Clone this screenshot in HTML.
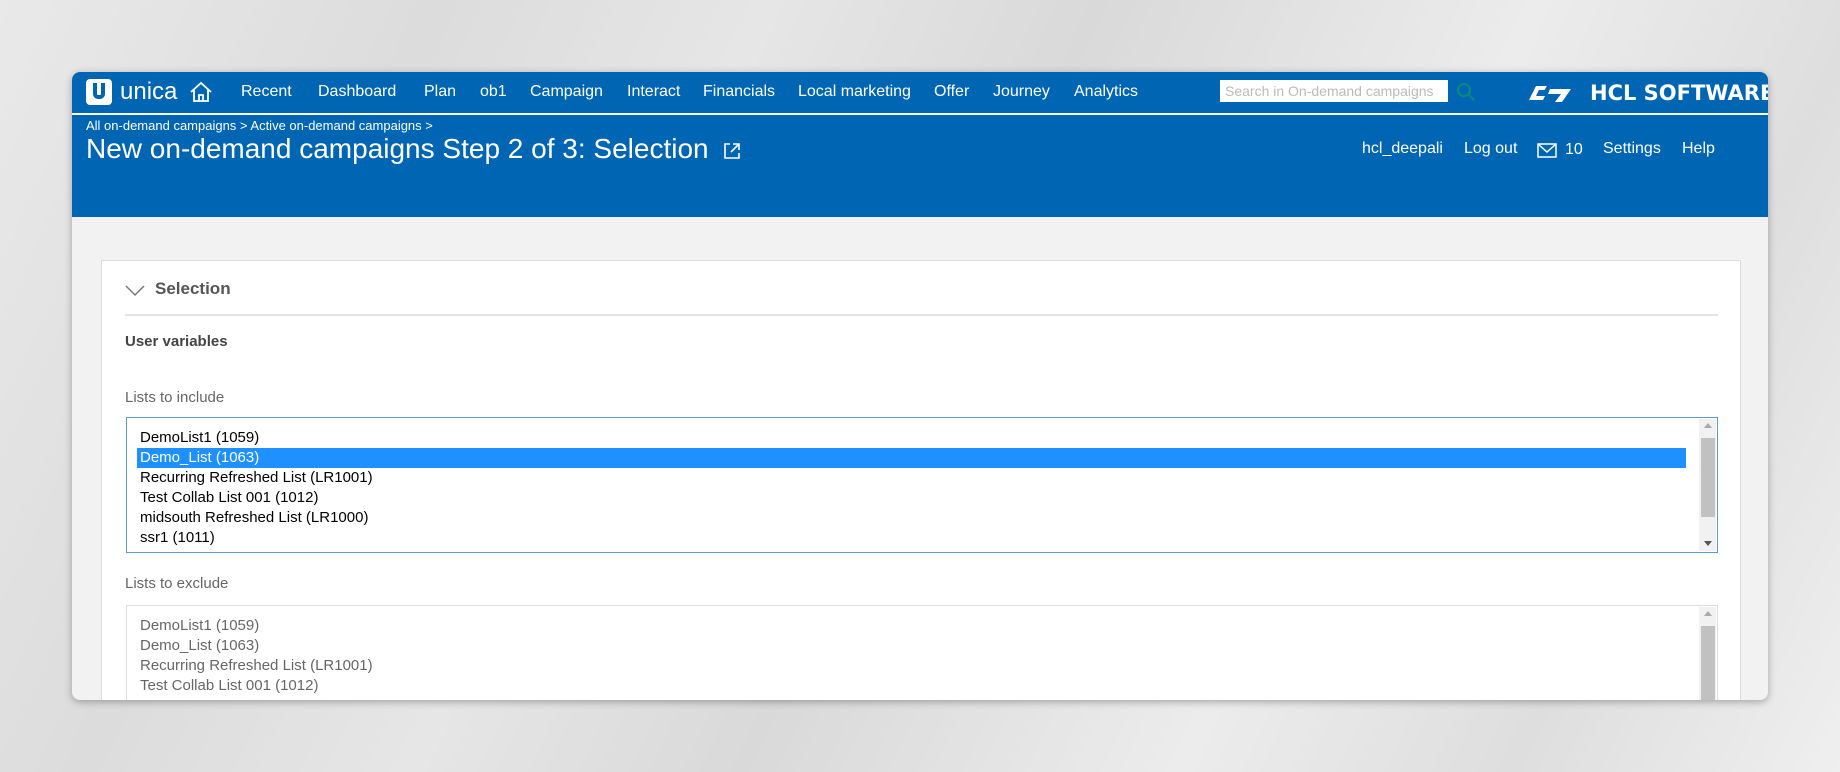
<!DOCTYPE html>
<html><head><meta charset="utf-8"><style>
*{margin:0;padding:0;box-sizing:border-box}
body{width:1840px;height:772px;overflow:hidden;font-family:"Liberation Sans",Arial,sans-serif;
background:linear-gradient(115deg,#e9e9e9 0%,#dcdcdc 20%,#e6e6e6 35%,#d9d9d9 50%,#ececec 70%,#dedede 85%,#efefef 100%);position:relative}
.a{position:absolute;white-space:nowrap}
.card{position:absolute;left:72px;top:72px;width:1696px;height:628px;border-radius:8px;overflow:hidden;background:#f2f2f2;box-shadow:0 2px 8px rgba(0,0,0,.3)}
.hdr{position:absolute;left:0;top:0;width:1696px;height:145px;background:#0066b3}
.line{position:absolute;left:0;top:41px;width:1696px;height:2px;background:#fff}
.nav{font-size:16px;color:#fff}
.panel{position:absolute;left:29px;top:188px;width:1640px;height:460px;background:#fff;border:1px solid #ddd}
.lb{position:absolute;left:54px;width:1592px;background:#fff}
.it{position:absolute;left:13px;font-size:15px;height:20px;line-height:20px}
.sb{position:absolute;right:1px;top:1px;width:17px;bottom:1px;background:#f1f1f1}
.th{position:absolute;left:2px;width:14px;background:#c1c1c1}
</style></head><body>
<div class="card">
 <div class="hdr">
  <div class="a" style="left:14px;top:7px;width:26px;height:26px;background:#fff;border-radius:4px"><div style="position:absolute;left:7px;top:4px;width:12px;height:16px;border:4px solid #0066b3;border-top:none;border-radius:0 0 5px 5px"></div></div>
  <div class="a" style="left:48px;top:6px;font-size:24px;color:#fff">unica</div>
  <svg class="a" style="left:117px;top:8px" width="24" height="24" viewBox="0 0 24 24" fill="none" stroke="#fff" stroke-width="1.8"><path d="M2 12L12 3l10 9M5 10v11h14V10M10 21v-6h4v6"/></svg>
  <div class="a nav" style="left:169px;top:11px">Recent</div>
  <div class="a nav" style="left:246px;top:11px">Dashboard</div>
  <div class="a nav" style="left:352px;top:11px">Plan</div>
  <div class="a nav" style="left:408px;top:11px">ob1</div>
  <div class="a nav" style="left:458px;top:11px">Campaign</div>
  <div class="a nav" style="left:555px;top:11px">Interact</div>
  <div class="a nav" style="left:631px;top:11px">Financials</div>
  <div class="a nav" style="left:726px;top:11px">Local marketing</div>
  <div class="a nav" style="left:862px;top:11px">Offer</div>
  <div class="a nav" style="left:921px;top:11px">Journey</div>
  <div class="a nav" style="left:1002px;top:11px">Analytics</div>
  <div class="a" style="left:1148px;top:8px;width:228px;height:22px;background:#fff;color:#bbb;font-size:14px;line-height:22px;padding-left:5px;overflow:hidden">Search in On-demand campaigns</div>
  <svg class="a" style="left:1384px;top:10px" width="20" height="20" viewBox="0 0 20 20" fill="none" stroke="#0a8a7a" stroke-width="2"><circle cx="8" cy="8" r="6"/><path d="M12.5 12.5l6 6"/></svg>
  <svg class="a" style="left:1457px;top:13px" width="44" height="18" viewBox="0 0 44 18" fill="#fff"><path d="M7 1h11l-2.5 4H10L7 11h9l-2 4H0z"/><path d="M21 4h21l-9 13h-7l6-8h-13z"/></svg>
  <div class="a" style="left:1518px;top:9px;font-size:21px;font-weight:bold;color:#fff;font-family:'DejaVu Sans',sans-serif">HCL SOFTWARE</div>
  <div class="line"></div>
  <div class="a" style="left:14px;top:46px;font-size:13px;color:#fff">All on-demand campaigns &gt; Active on-demand campaigns &gt;</div>
  <div class="a" style="left:14px;top:61px;font-size:28px;color:#fff">New on-demand campaigns Step 2 of 3: Selection</div>
  <svg class="a" style="left:650px;top:69px" width="20" height="20" viewBox="0 0 20 20" fill="none" stroke="#fff" stroke-width="1.6"><path d="M8 3H3v14h14v-5M11 3h6v6M17 3l-8 8"/></svg>
  <div class="a" style="left:1290px;top:68px;font-size:16px;color:#fff">hcl_deepali</div>
  <div class="a" style="left:1392px;top:68px;font-size:16px;color:#fff">Log out</div>
  <svg class="a" style="left:1465px;top:71px" width="20" height="15" viewBox="0 0 20 15" fill="none" stroke="#fff" stroke-width="1.5"><rect x="1" y="1" width="18" height="13"/><path d="M1 1l9 8 9-8"/></svg>
  <div class="a" style="left:1493px;top:69px;font-size:16px;color:#fff">10</div>
  <div class="a" style="left:1531px;top:68px;font-size:16px;color:#fff">Settings</div>
  <div class="a" style="left:1610px;top:68px;font-size:16px;color:#fff">Help</div>
 </div>
 <div class="panel">
  <svg class="a" style="left:23px;top:24px" width="20" height="12" viewBox="0 0 20 12" fill="none" stroke="#777" stroke-width="1.5"><path d="M1 1l9 9 9-9"/></svg>
  <div class="a" style="left:53px;top:18px;font-size:17px;font-weight:bold;color:#555">Selection</div>
  <div class="a" style="left:23px;top:53px;width:1593px;height:2px;background:#e3e3e3"></div>
  <div class="a" style="left:23px;top:72px;font-size:15px;font-weight:bold;color:#444">User variables</div>
  <div class="a" style="left:23px;top:128px;font-size:15px;color:#666">Lists to include</div>
  <div class="lb" style="left:24px;top:156px;height:136px;border:1px solid #5b9bd5">
   <div class="it" style="top:10px">DemoList1 (1059)</div>
   <div style="position:absolute;left:10px;top:30px;width:1549px;height:20px;background:#1e90ff"></div>
   <div class="it" style="top:30px;color:#fff">Demo_List (1063)</div>
   <div class="it" style="top:50px">Recurring Refreshed List (LR1001)</div>
   <div class="it" style="top:70px">Test Collab List 001 (1012)</div>
   <div class="it" style="top:90px">midsouth Refreshed List (LR1000)</div>
   <div class="it" style="top:110px">ssr1 (1011)</div>
   <div class="sb"><div class="a" style="left:5px;top:4px;border:4px solid transparent;border-bottom:5px solid #aaa;border-top:0"></div><div class="th" style="top:19px;height:79px"></div><div class="a" style="left:5px;bottom:5px;border:4px solid transparent;border-top:5px solid #555;border-bottom:0"></div></div>
  </div>
  <div class="a" style="left:23px;top:314px;font-size:15px;color:#666">Lists to exclude</div>
  <div class="lb" style="left:24px;top:344px;height:140px;border:1px solid #ddd;color:#666">
   <div class="it" style="top:10px">DemoList1 (1059)</div>
   <div class="it" style="top:30px">Demo_List (1063)</div>
   <div class="it" style="top:50px">Recurring Refreshed List (LR1001)</div>
   <div class="it" style="top:70px">Test Collab List 001 (1012)</div>
   <div class="sb"><div class="a" style="left:5px;top:4px;border:4px solid transparent;border-bottom:5px solid #aaa;border-top:0"></div><div class="th" style="top:19px;height:120px"></div></div>
  </div>
 </div>
</div>
</body></html>
